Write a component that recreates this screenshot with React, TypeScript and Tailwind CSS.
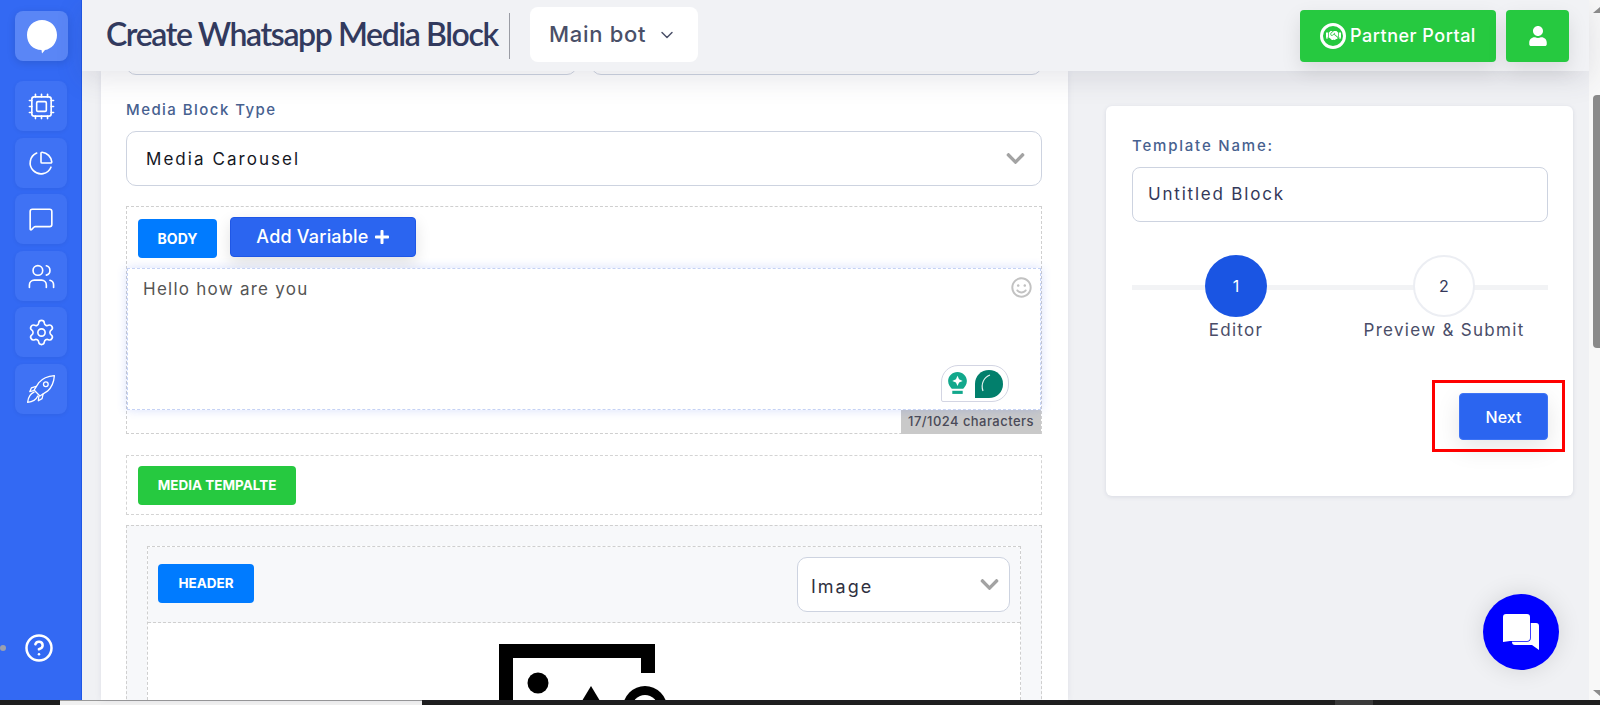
import React from "react";
import { Cpu, ChartPie, MessageSquare, Users, Settings, CircleHelp, ChevronDown } from "lucide-react";
import { FaChevronDown, FaPlus, FaRegSmile, FaUser, FaHandshake } from "react-icons/fa";

function RocketIcon() {
  return (
    <svg width="30" height="30" viewBox="0 0 28 28" fill="none" stroke="#fff" strokeWidth="1.2" strokeLinejoin="round" strokeLinecap="round">
      <path d="M26.500 1.500C20 2 15 4.500 12 8L7.500 15L13 20.500L20 16C23.500 13 26 8 26.500 1.500Z" />
      <circle cx="18.500" cy="9.500" r="2.200" />
      <path d="M9.500 11.500L5 13L3.500 16.500L7 15.500" />
      <path d="M16 18.500L15 23L11.500 25L12 21" />
      <path d="M7.500 17C4 18.500 2 22 1.500 26.500C6 26 9.500 24 11 20.500" />
    </svg>
  );
}

const tiles = [
  { icon: <Cpu size={29} strokeWidth={1.35} color="#fff" />, cls: "mt-[20px]" },
  { icon: <ChartPie size={26} strokeWidth={1.5} color="#fff" />, cls: "mt-[7px]" },
  { icon: <MessageSquare size={26} strokeWidth={1.5} color="#fff" />, cls: "mt-[6px]" },
  { icon: <Users size={29} strokeWidth={1.35} color="#fff" />, cls: "mt-[7px]" },
  { icon: <Settings size={29} strokeWidth={1.35} color="#fff" />, cls: "mt-[6px]" },
  { icon: <RocketIcon />, cls: "mt-[7px]" },
];

function Sidebar() {
  return (
    <aside className="w-[82px] shrink-0 bg-[#3369f3] border-r border-[#1f57e6] flex flex-col items-start pl-[15px] pt-[11px] relative">
      <div className="w-[53px] h-[50px] rounded-[8px] bg-[#5a86f6] shadow-[0_2px_8px_rgba(0,0,0,0.12)] flex items-center justify-center">
        <svg width="32" height="35" viewBox="0 0 32 35">
          <path d="M16 1C24.500 1 31 7.500 31 16C31 24 25.500 30 19 31L16 34.500L15.500 31C7 31 1 24.500 1 16C1 7.500 7.500 1 16 1Z" fill="#fff" />
        </svg>
      </div>
      {tiles.map(({ icon, cls }, i) => (
        <div key={i} className={`w-[52px] h-[50px] rounded-[8px] bg-[#3f72f4] shadow-[0_1px_4px_rgba(0,0,0,0.06)] flex items-center justify-center ${cls}`}>
          {icon}
        </div>
      ))}
      <div className="mt-auto mb-[37px] ml-[9px]">
        <CircleHelp size={30} strokeWidth={2} color="#fff" />
      </div>
      <div className="absolute left-0 top-[645px] w-[6px] h-[6px] rounded-full bg-[#9aa0b0]" />
    </aside>
  );
}

function Header() {
  return (
    <header className="relative z-10 h-[71px] shrink-0 bg-[#f1f2f5] shadow-[0_8px_28px_rgba(60,65,90,0.13)] flex items-center pl-[24px] pr-[20px]">
      <h1 className="font-['Lato',sans-serif] text-[32px] pb-[3px] font-semibold tracking-[-1.4px] text-[#323a5e] w-[394px] whitespace-nowrap">
        Create Whatsapp Media Block
      </h1>
      <div className="w-px h-[46px] bg-[#9a9ca4] ml-[9px]" />
      <div className="ml-[20px] -mt-[2px] w-[168px] h-[55px] rounded-[8px] bg-white flex items-center pl-[19px] pb-[1px] text-[22px] font-medium tracking-[0.7px] text-[#4a5068]">
        Main bot
        <ChevronDown size={20} strokeWidth={1.75} className="ml-[11px] mt-[2px]" />
      </div>
      <button className="ml-auto w-[196px] h-[52px] rounded-[4px] bg-[#26c940] text-white text-[18px] font-medium tracking-[0.5px] flex items-center justify-center gap-[4px] shadow-[0_8px_20px_rgba(0,0,0,0.1)]">
        <span className="w-[26px] h-[26px] rounded-full border-[3px] border-white flex items-center justify-center">
          <FaHandshake size={15} color="#fff" />
        </span>
        Partner Portal
      </button>
      <button className="ml-[10px] w-[63px] h-[52px] rounded-[4px] bg-[#26c940] flex items-center justify-center shadow-[0_8px_20px_rgba(0,0,0,0.1)]">
        <FaUser size={20} color="#fff" />
      </button>
    </header>
  );
}

function Select({ text, cls, textCls }: { text: string; cls: string; textCls: string }) {
  return (
    <div className={`h-[55px] rounded-[10px] bg-white border border-[#cdd3e0] flex items-center justify-between ${cls}`}>
      <span className={textCls}>{text}</span>
      <FaChevronDown size={21} color="#a3a3a3" />
    </div>
  );
}

function Panel() {
  return (
    <section className="ml-[19px] w-[967px] shrink-0 h-full overflow-hidden bg-white pl-[25px] pr-[26px] shadow-[0_0_6px_rgba(80,90,130,0.1)]">
      <div className="grid grid-cols-2 gap-[14px] -mt-[50px]">
        <div className="h-[54px] rounded-[10px] border border-[#cdd3e0]" />
        <div className="h-[54px] rounded-[10px] border border-[#cdd3e0]" />
      </div>
      <div className="mt-[25px] mb-[-1px] h-[20px] leading-[20px] text-[15px] font-medium tracking-[1.45px] text-[#47618f]">Media Block Type</div>
      <Select text="Media Carousel" cls="mt-[12px] pl-[19px] pr-[15px]" textCls="pt-[3px] text-[17px] tracking-[2.05px] text-[#15171f]" />

      <div className="mt-[20px] h-[228px] border border-dashed border-[#cfcfcf] flex flex-col">
        <div className="h-[61px] shrink-0 flex items-start pl-[11px] pt-[10px]">
          <div className="mt-[2px] w-[79px] h-[39px] rounded-[4px] bg-[#007bff] text-white text-[14px] font-bold flex items-center justify-center">BODY</div>
          <div className="ml-[13px] w-[186px] h-[40px] rounded-[4px] bg-[#2b65f0] border border-[#1f57e6] text-white text-[18px] font-medium tracking-[0.2px] pb-[1px] flex items-center justify-center gap-[5px] shadow-[0_6px_16px_rgba(0,0,0,0.12)]">
            Add Variable <FaPlus size={16} />
          </div>
        </div>
        <div className="relative h-[142px] shrink-0 border border-dashed border-[#c5d2f5] bg-white shadow-[0_0_10px_rgba(60,100,240,0.2)] pl-[15px] pt-[8px] text-[17px] tracking-[1.25px] text-[#555]">
          Hello how are you
          <FaRegSmile size={21} color="#c2c2c2" className="absolute right-[8px] top-[8px]" />
          <div className="absolute left-[813px] top-[96px] w-[68px] h-[37px] rounded-[17px_17px_17px_2px] border border-[#d3d5e3] bg-white flex items-center justify-center gap-[7px]">
            <svg width="21" height="25" viewBox="0 0 20 24">
              <path d="M10 1C15 1 19 5 19 9.500C19 13 17 15 15.500 17H4.500C3 15 1 13 1 9.500C1 5 5 1 10 1Z" fill="#12a88c" />
              <path d="M10 4.500L11.500 8L15 9.500L11.500 11L10 14.500L8.500 11L5 9.500L8.500 8Z" fill="#fff" />
              <rect x="5" y="19" width="10" height="3" fill="#12a88c" />
            </svg>
            <svg width="28" height="28" viewBox="0 0 28 28">
              <path d="M14 0C22 0 28 6 28 14C28 22 22 28 14 28H0V14C0 6 6 0 14 0Z" fill="#027f6c" />
              <path d="M15 5C9 7 5.500 14 8 21" fill="none" stroke="#e5f3f0" strokeWidth="1.2" />
            </svg>
          </div>
        </div>
        <div className="self-end w-[140px] h-[24px] shrink-0 bg-[#c9c9c9] text-[13px] font-medium tracking-[0.45px] text-[#4a4a58] flex items-center justify-center whitespace-nowrap">17/1024 characters</div>
      </div>

      <div className="mt-[21px] h-[60px] border border-dashed border-[#d4d4d4] pl-[11px] pt-[10px]">
        <div className="w-[158px] h-[39px] rounded-[4px] bg-[#26c940] text-white text-[13.5px] font-bold flex items-center justify-center">MEDIA TEMPALTE</div>
      </div>

      <div className="mt-[10px] h-[300px] border border-dashed border-[#cfcfcf] bg-[#f7f8fa] pt-[20px] px-[20px]">
        <div className="h-[300px] border border-dashed border-[#cfcfcf] bg-white">
          <div className="h-[76px] bg-[#f7f8fa] border-b border-dashed border-[#cfcfcf] flex items-start pl-[10px] pr-[10px] pt-[10px]">
            <div className="mt-[7px] w-[96px] h-[39px] rounded-[4px] bg-[#007bff] text-white text-[13.5px] font-bold flex items-center justify-center">HEADER</div>
            <Select text="Image" cls="ml-auto w-[213px] pl-[13px] pr-[9px]" textCls="pt-[3px] text-[18px] tracking-[2px] text-[#2f3040]" />
          </div>
          <svg width="180" height="100" viewBox="0 0 180 100" className="mt-[21px] ml-[351px]">
            <path d="M0 0H156V29H142V14H14V100H0Z" fill="#000" />
            <circle cx="39" cy="39" r="10.500" fill="#000" />
            <path d="M92 42L127 100H57Z" fill="#000" />
            <circle cx="146" cy="64" r="22" fill="#000" />
            <circle cx="146" cy="64" r="13" fill="#fff" />
          </svg>
        </div>
      </div>
    </section>
  );
}

function TemplateCard() {
  return (
    <div className="relative ml-[38px] mt-[35px] w-[467px] h-[390px] shrink-0 rounded-[6px] bg-white shadow-[0_1px_4px_rgba(80,90,130,0.15)] pl-[26px] pr-[25px] pt-[30px]">
      <div className="h-[20px] leading-[20px] text-[15px] font-medium tracking-[1.8px] text-[#47618f]">Template Name:</div>
      <div className="mt-[11px] h-[55px] rounded-[8px] border border-[#cdd3e0] flex items-center pl-[15px] text-[17px] tracking-[1.8px] text-[#34385a]">Untitled Block</div>

      <div className="relative mt-[33px] h-[76px]">
        <div className="absolute left-0 right-0 top-[30px] h-[5px] bg-[#f2f3f5]" />
        <div className="relative grid grid-cols-[208px_208px]">
          <div className="flex flex-col items-center">
            <div className="w-[62px] h-[62px] rounded-full bg-[#1a55e3] text-white text-[16px] flex items-center justify-center">1</div>
            <div className="mt-[1px] text-[17px] tracking-[1.3px] text-[#4a4d68] whitespace-nowrap">Editor</div>
          </div>
          <div className="flex flex-col items-center">
            <div className="w-[62px] h-[62px] rounded-full bg-white border-[2px] border-[#eceef3] text-[#34385a] text-[16px] flex items-center justify-center">2</div>
            <div className="mt-[1px] text-[17px] tracking-[1.3px] text-[#4a4d68] whitespace-nowrap">Preview &amp; Submit</div>
          </div>
        </div>
      </div>

      <div className="flex justify-end mt-[62px]">
        <button className="w-[89px] h-[47px] rounded-[4px] bg-[#2b65f0] border border-[#3f74f4] text-white text-[16px] font-medium shadow-[0_8px_24px_rgba(0,0,0,0.1)]">Next</button>
      </div>
      <div className="absolute left-[326px] top-[274px] w-[133px] h-[72px] border-[3px] border-[#ff0000] pointer-events-none" />
    </div>
  );
}

function Scrollbar() {
  return (
    <div className="w-[11px] shrink-0 bg-[#f8f8f8] flex flex-col items-end relative">
      <div className="mt-[7px] w-0 h-0 border-l-[7px] border-b-[6px] border-l-transparent border-b-[#8c8c8c]" />
      <div className="mt-[82px] w-[7px] h-[253px] rounded-l-[4px] bg-[#8a8a8a]" />
      <div className="mt-auto mb-[4px] w-0 h-0 border-l-[7px] border-t-[6px] border-l-transparent border-t-[#8c8c8c]" />
    </div>
  );
}

export default function App() {
  return (
    <div className="w-[1600px] h-[705px] overflow-hidden flex flex-col font-['Inter',sans-serif] bg-[#f0f1f4]">
      <div className="flex-1 min-h-0 flex">
        <Sidebar />
        <main className="relative flex-1 min-w-0 flex flex-col">
          <Header />
          <div className="flex-1 min-h-0 flex">
            <Panel />
            <TemplateCard />
          </div>
          <div className="absolute left-[1401px] top-[594px] w-[76px] h-[76px] rounded-full bg-[#0000ff] shadow-[0_0_24px_rgba(0,0,0,0.12)] flex items-center justify-center">
            <svg width="36" height="36" viewBox="0 0 36 36">
              <path d="M12 9H33C35 9 36 10 36 12V36L29 31H12C10 31 9 30 9 28V12C9 10 10 9 12 9Z" fill="#fff" />
              <path d="M3 0H24C26 0 27 1 27 3V24C27 26 26 27 24 27H7L0 28V3C0 1 1 0 3 0Z" fill="#fff" stroke="#0000ff" strokeWidth="1.500" paintOrder="stroke" />
            </svg>
          </div>
        </main>
        <Scrollbar />
      </div>
      <div className="h-[5px] shrink-0 bg-[#1e1e1e] flex">
        <div className="ml-[60px] w-[362px] bg-[#f0f0f0] border-t border-[#999]" />
        <div className="ml-[913px] w-[38px] bg-[#3a3a3a]" />
      </div>
    </div>
  );
}
